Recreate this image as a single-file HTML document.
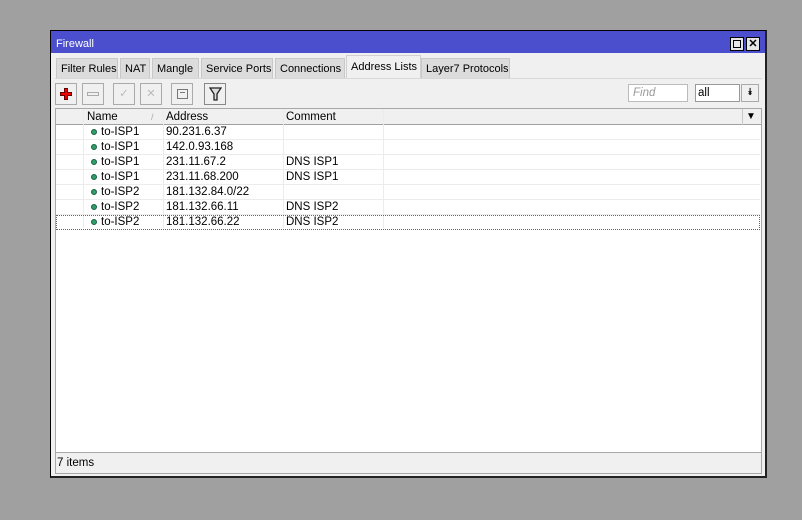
<!DOCTYPE html>
<html><head><style>
*{margin:0;padding:0;box-sizing:border-box}
body{width:802px;height:520px;background:#a0a0a0;position:relative;font-family:"Liberation Sans",sans-serif;font-size:11.5px;color:#000;overflow:hidden}
.a{position:absolute}
.tab{position:absolute;top:58px;height:20px;background:#dcdcdc;border:1px solid #c8c8c8;border-bottom:none;padding:4px 0 0 4px;white-space:nowrap;overflow:hidden;font-size:11px}
.btn{position:absolute;top:83px;width:22px;height:22px;border:1px solid #aaa;background:#f0f0f0}
.row{position:absolute;left:56px;width:704px;height:15px;border-bottom:1px solid #ececec}
.row span{position:absolute;top:1px}
.dot{position:absolute;left:35px;top:4px;width:6px;height:6px;border-radius:50%;background:#2e9e6a;border:1px solid #1a5e40}
.vl{position:absolute;top:109px;width:1px;height:119px;background:#ececec}
</style></head><body>
<div class="a" style="left:50px;top:30px;width:717px;height:448px;background:#f0f0f0;border:1px solid #000;border-right:2px solid #222;border-bottom:2px solid #222"></div>
<div class="a" style="left:51px;top:31px;width:714px;height:22px;background:#4b4fcd"></div>
<div class="a" style="left:56px;top:38px;color:#fff;font-size:11px">Firewall</div>
<div class="a" style="left:730px;top:37px;width:14px;height:14px;border:1px solid #000;background:#e6e6e6"><div class="a" style="left:2px;top:2px;width:8px;height:8px;border:1px solid #000"></div></div>
<div class="a" style="left:746px;top:37px;width:14px;height:14px;border:1px solid #000;background:#e6e6e6;font-size:11px;font-weight:bold;line-height:12px;text-align:center">✕</div>
<div class="tab" style="left:56px;width:62px">Filter Rules</div>
<div class="tab" style="left:120px;width:30px">NAT</div>
<div class="tab" style="left:152px;width:47px">Mangle</div>
<div class="tab" style="left:201px;width:72px">Service Ports</div>
<div class="tab" style="left:275px;width:70px">Connections</div>
<div class="tab" style="left:346px;width:75px;top:55px;height:24px;background:#f0f0f0;border-color:#d0d0d0;padding-top:5px">Address Lists</div>
<div class="tab" style="left:421px;width:89px">Layer7 Protocols</div>
<div class="a" style="left:55px;top:78px;width:707px;height:1px;background:#d8d8d8"></div>
<div class="btn" style="left:55px"><div class="a" style="left:4px;top:8px;width:12px;height:4px;background:#e00;border:1px solid #600"></div><div class="a" style="left:8px;top:4px;width:4px;height:12px;background:#e00;border:1px solid #600"></div><div class="a" style="left:5px;top:9px;width:10px;height:2px;background:#e00"></div></div>
<div class="btn" style="left:82px"><div class="a" style="left:4px;top:8px;width:12px;height:4px;border:1px solid #aaa"></div></div>
<div class="btn" style="left:113px;color:#bbb;text-align:center;line-height:20px">✓</div>
<div class="btn" style="left:140px;color:#bbb;text-align:center;line-height:20px">✕</div>
<div class="btn" style="left:171px"><div class="a" style="left:5px;top:5px;width:11px;height:10px;border:1px solid #777"></div><div class="a" style="left:8px;top:8px;width:5px;height:1px;background:#777"></div></div>
<div class="btn" style="left:204px;border-color:#888"><svg class="a" style="left:4px;top:3px" width="13" height="15"><path d="M1 1H12L8 7V13H5V7Z" fill="#ddd" stroke="#222" stroke-width="1.3"/></svg></div>
<div class="a" style="left:628px;top:84px;width:60px;height:18px;border:1px solid #bbb;background:#fff;color:#999;font-style:italic;padding:2px 4px">Find</div>
<div class="a" style="left:695px;top:84px;width:45px;height:18px;border:1px solid #999;background:#fff;padding:2px 2px;color:#000">all</div>
<div class="a" style="left:741px;top:84px;width:18px;height:18px;border:1px solid #aaa;background:#f0f0f0;font-size:10px;text-align:center;line-height:16px">⯯</div>
<div class="a" style="left:55px;top:108px;width:707px;height:366px;border:1px solid #a8a8a8;background:#f0f0f0"></div>
<div class="a" style="left:56px;top:109px;width:705px;height:343px;background:#fff"></div>
<div class="a" style="left:56px;top:109px;width:705px;height:16px;background:#f0f0f0;border-bottom:1px solid #a0a0a0"></div>
<div class="a" style="left:83px;top:109px;width:1px;height:16px;background:#c8c8c8"></div>
<div class="a" style="left:163px;top:109px;width:1px;height:16px;background:#c8c8c8"></div>
<div class="a" style="left:283px;top:109px;width:1px;height:16px;background:#c8c8c8"></div>
<div class="a" style="left:383px;top:109px;width:1px;height:16px;background:#c8c8c8"></div>
<div class="a" style="left:742px;top:109px;width:1px;height:16px;background:#c8c8c8"></div>
<div class="a" style="left:87px;top:111px">Name</div>
<div class="a" style="left:151px;top:112px;color:#aaa;font-size:9px">/</div>
<div class="a" style="left:166px;top:111px">Address</div>
<div class="a" style="left:286px;top:111px">Comment</div>
<div class="a" style="left:746px;top:111px;font-size:10px">▼</div>
<div class="vl" style="left:83px"></div><div class="vl" style="left:163px"></div><div class="vl" style="left:283px"></div><div class="vl" style="left:383px"></div>
<div class="row" style="top:125px"><i class="dot"></i><span style="left:45px">to-ISP1</span><span style="left:110px">90.231.6.37</span></div>
<div class="row" style="top:140px"><i class="dot"></i><span style="left:45px">to-ISP1</span><span style="left:110px">142.0.93.168</span></div>
<div class="row" style="top:155px"><i class="dot"></i><span style="left:45px">to-ISP1</span><span style="left:110px">231.11.67.2</span><span style="left:230px">DNS ISP1</span></div>
<div class="row" style="top:170px"><i class="dot"></i><span style="left:45px">to-ISP1</span><span style="left:110px">231.11.68.200</span><span style="left:230px">DNS ISP1</span></div>
<div class="row" style="top:185px"><i class="dot"></i><span style="left:45px">to-ISP2</span><span style="left:110px">181.132.84.0/22</span></div>
<div class="row" style="top:200px"><i class="dot"></i><span style="left:45px">to-ISP2</span><span style="left:110px">181.132.66.11</span><span style="left:230px">DNS ISP2</span></div>
<div class="row" style="top:215px;border:1px dotted #666;height:15px"><i class="dot" style="top:3px;left:34px"></i><span style="left:44px;top:0">to-ISP2</span><span style="left:109px;top:0">181.132.66.22</span><span style="left:229px;top:0">DNS ISP2</span></div>
<div class="a" style="left:56px;top:452px;width:705px;height:1px;background:#a8a8a8"></div>
<div class="a" style="left:57px;top:457px">7 items</div>
</body></html>
